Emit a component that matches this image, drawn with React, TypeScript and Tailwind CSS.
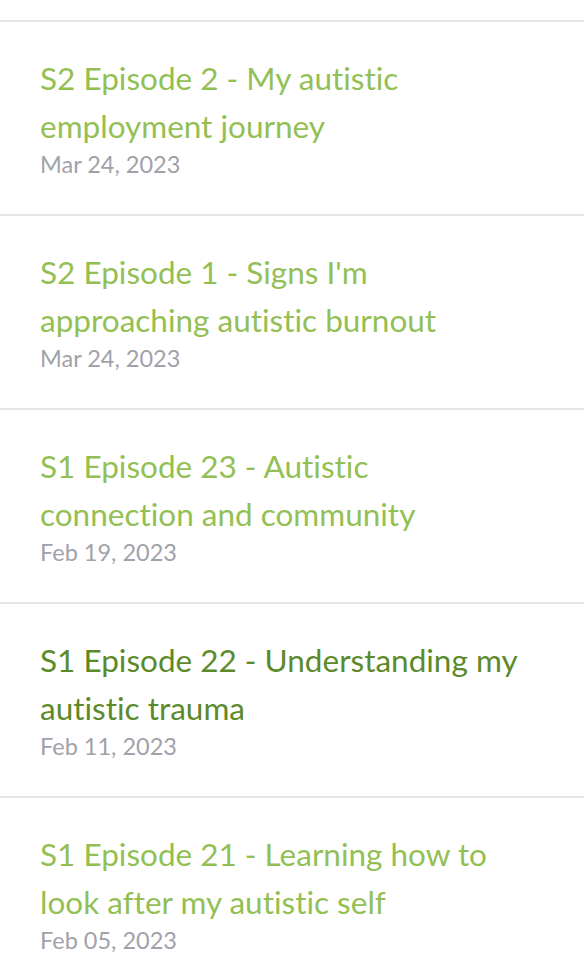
const episodes = [
  { title: "S2 Episode 2 - My autistic employment journey", date: "Mar 24, 2023" },
  { title: "S2 Episode 1 - Signs I'm approaching autistic burnout", date: "Mar 24, 2023" },
  { title: "S1 Episode 23 - Autistic connection and community", date: "Feb 19, 2023" },
  { title: "S1 Episode 22 - Understanding my autistic trauma", date: "Feb 11, 2023", visited: true },
  { title: "S1 Episode 21 - Learning how to look after my autistic self", date: "Feb 05, 2023" },
];

export default function App() {
  return (
    <div className="min-h-screen bg-white pt-5 font-['Lato',sans-serif] [font-variant-ligatures:none]">
      <ul>
        {episodes.map((ep) => (
          <li key={ep.title} className="border-t-2 border-[#e6e6e6] pl-10 pr-[66px] pt-8 pb-9">
            <a
              href="#"
              className={
                "block text-[31.5px] leading-[48px] " +
                (ep.visited ? "text-[#5c8a2b]" : "text-[#93bf54]")
              }
            >
              {ep.title}
            </a>
            <div className="text-[23.5px] leading-[28px] text-[#9fa2a9]">{ep.date}</div>
          </li>
        ))}
      </ul>
    </div>
  );
}
